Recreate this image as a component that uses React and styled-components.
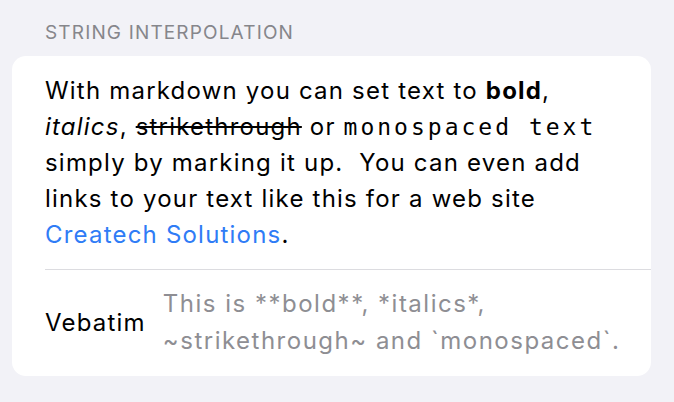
import React from "react";
import styled, { createGlobalStyle } from "styled-components";

const Global = createGlobalStyle`
  html, body { margin: 0; padding: 0; background: #f2f2f7; }
  body { font-family: Inter, "Noto Sans", sans-serif; -webkit-font-smoothing: antialiased; }
`;

const Page = styled.div`
  width: 674px;
  height: 402px;
  box-sizing: border-box;
  padding: 20px 23px 0 12px;
  background: #f2f2f7;
  overflow: hidden;
`;

const SectionHeader = styled.div`
  padding-left: 33px;
  font-size: 19px;
  line-height: 26px;
  color: #86868b;
  letter-spacing: 1.15px;
  margin-bottom: 10px;
`;

const Card = styled.div`
  background: #ffffff;
  border-radius: 14px;
  padding-left: 33px;
`;

const Row = styled.div`
  display: flex;
  align-items: center;
  padding: ${(p) => p.$pad || "0"};
  border-bottom: ${(p) => (p.$divider ? "1px solid #dcdce0" : "none")};
  gap: ${(p) => p.$gap || "0"};
`;

const Body = styled.p`
  margin: 0;
  font-size: 24px;
  line-height: 36px;
  letter-spacing: 1.2px;
  color: #000;
  padding-right: 40px;
`;

const Bold = styled.strong`
  font-weight: 700;
`;

const Mono = styled.code`
  font-family: "DejaVu Sans Mono", "Liberation Mono", monospace;
  font-size: 23px;
  letter-spacing: 3px;
`;

const Link = styled.a`
  color: #2f7cf6;
  text-decoration: none;
`;

const Label = styled.span`
  font-size: 24px;
  letter-spacing: 1.2px;
  color: #000;
  flex: 0 0 auto;
`;

const Verbatim = styled.span`
  font-size: 24px;
  line-height: 37px;
  letter-spacing: 1.5px;
  color: #8e8e93;
`;

export default function App() {
  return (
    <>
      <Global />
      <Page>
        <SectionHeader>STRING INTERPOLATION</SectionHeader>
        <Card>
          <Row $divider $pad="17px 0 16px 0">
            <Body>
              With markdown you can set text to <Bold>bold</Bold>,{" "}
              <em>italics</em>, <s>strikethrough</s> or{" "}
              <Mono>monospaced text</Mono> simply by marking it up.&nbsp; You
              can even add links to your text like this for a web site{" "}
              <Link href="#">Createch Solutions</Link>.
            </Body>
          </Row>
          <Row $pad="15px 20px 17px 0" $gap="17px">
            <Label>Vebatim</Label>
            <Verbatim>
              This is **bold**, *italics*, ~strikethrough~ and `monospaced`.
            </Verbatim>
          </Row>
        </Card>
      </Page>
    </>
  );
}
